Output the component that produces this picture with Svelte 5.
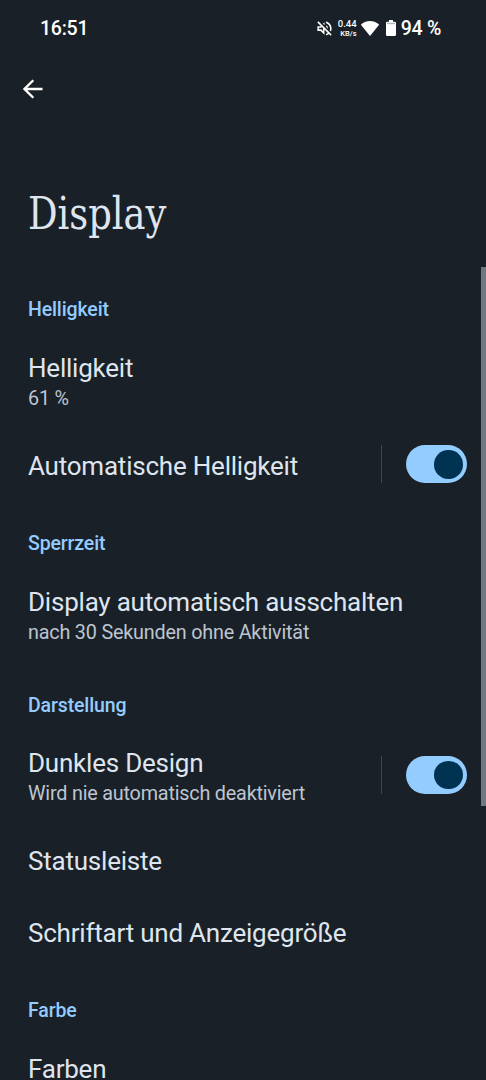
<script>
  const sections = [
    { name: 'Helligkeit', rows: [
      { title: 'Helligkeit', sub: '61 %' },
      { title: 'Automatische Helligkeit', toggle: true }
    ] },
    { name: 'Sperrzeit', rows: [
      { title: 'Display automatisch ausschalten', sub: 'nach 30 Sekunden ohne Aktivität' }
    ] },
    { name: 'Darstellung', rows: [
      { title: 'Dunkles Design', sub: 'Wird nie automatisch deaktiviert', toggle: true },
      { title: 'Statusleiste' },
      { title: 'Schriftart und Anzeigegröße' }
    ] },
    { name: 'Farbe', rows: [{ title: 'Farben' }] }
  ];
</script>

<main class="screen">
  <header class="status">
    <span class="time">16:51</span>
    <div class="indicators">
      <svg class="mute" width="18" height="18" viewBox="0 0 24 24" fill="#fff"><path d="M4.34 2.93 2.93 4.34 7.29 8.7 7 9H3v6h4l5 5v-6.59l4.18 4.18c-.65.49-1.38.88-2.18 1.11v2.06a8.94 8.94 0 0 0 3.61-1.75l2.05 2.05 1.41-1.41L4.34 2.93zM10 15.17 7.83 13H5v-2h2.83l.88-.88L10 11.41v3.76zM19 12c0 .82-.15 1.61-.41 2.34l1.53 1.53c.56-1.17.88-2.48.88-3.87 0-4.28-2.99-7.86-7-8.77v2.06c2.89.86 5 3.54 5 6.71zm-7-8-1.88 1.88L12 7.76V4zm4.5 8A4.5 4.5 0 0 0 14 7.97v1.79l2.48 2.48c.01-.08.02-.16.02-.24z" /></svg>
      <div class="speed"><span class="rate">0.44</span><span class="unit">KB/s</span></div>
      <svg class="wifi" width="18" height="15" viewBox="0 0 18 15" fill="#fff"><path d="M9 15 .3 4.2C0 3.8 0 3.3.5 3 3 .9 5.900 0 9 0s6 .9 8.500 3c.5.3.5.8.2 1.200z" /></svg>
      <svg class="battery" width="10" height="16" viewBox="0 0 10 16"><path fill="#fff" d="M3 0h4v1.700h1.700Q10 1.700 10 3v11.700Q10 16 8.700 16H1.300Q0 16 0 14.700V3Q0 1.700 1.300 1.700H3z" /><path fill="#b5b8ba" d="M1 2.700h8v1.500H1z" /></svg>
      <span class="percent">94 %</span>
    </div>
  </header>

  <nav>
    <svg width="20" height="20" viewBox="0 0 20 20" fill="none" stroke="#fff" stroke-width="2.300"><path d="M19.500 10H2M10.300 1.200 1.500 10l8.800 8.800" /></svg>
  </nav>

  <h1>Display</h1>

  {#each sections as section}
    <section>
      <h2>{section.name}</h2>
      {#each section.rows as row}
        <div class="row" class:double={row.sub}>
          <div class="label">
            <div class="title">{row.title}</div>
            {#if row.sub}<div class="sub">{row.sub}</div>{/if}
          </div>
          {#if row.toggle}
            <div class="control"><div class="switch"><i></i></div></div>
          {/if}
        </div>
      {/each}
    </section>
  {/each}
  <div class="scrollbar"></div>
</main>

<style>
  :global(body) { background: #1a2027; overflow: hidden; }
  .screen { position: relative; height: 1080px; overflow: hidden; background: #1a2027; color: #dfe5ee; font-family: Roboto, sans-serif; box-sizing: border-box; }
  .status { height: 56px; padding: 0 45px 0 40px; display: flex; align-items: center; justify-content: space-between; color: #fff; font-size: 19.500px; font-weight: 500; letter-spacing: -.25px; }
  .indicators { display: flex; align-items: center; }
  .mute { width: 19px; height: 19px; }
  .speed { width: 20px; margin-left: 3px; display: flex; flex-direction: column; align-items: flex-end; letter-spacing: 0; }
  .rate { font-size: 9.500px; line-height: 10px; }
  .unit { font-size: 7.500px; line-height: 9px; }
  .wifi { margin-left: 4px; }
  .battery { margin: 0 5px 0 7px; }
  nav { height: 66px; padding-left: 23px; display: flex; align-items: center; }
  h1 { margin: 0; height: 146px; padding: 62px 0 0 28px; box-sizing: border-box; font: 400 45.500px/60px "DejaVu Serif Condensed", "DejaVu Serif", serif; transform: scaleX(.9); transform-origin: 28px 0; }
  h2 { margin: 0; height: 63.800px; padding: 31px 28px 0; box-sizing: border-box; font-size: 19.500px; line-height: 22px; font-weight: 500; letter-spacing: -.13px; color: #93ccff; }
  .row { height: 72px; padding: 0 19px 0 28px; display: flex; align-items: center; justify-content: space-between; }
  .row.double { height: 98px; }
  .title { font-size: 26px; line-height: 32px; letter-spacing: -.22px; white-space: nowrap; }
  .row.double .label { padding-top: 3px; }
  .sub { font-size: 19.800px; line-height: 29px; letter-spacing: -.2px; color: #bdc5d0; white-space: nowrap; }
  .control { display: flex; align-items: center; height: 38px; padding-left: 23.500px; border-left: 1px solid #42474e; margin-bottom: 3px; }
  .switch { width: 61.500px; height: 38px; padding: 0 4.500px; box-sizing: border-box; border-radius: 19px; background: #93ccff; display: flex; align-items: center; justify-content: flex-end; }
  .switch i { width: 28.500px; height: 28.500px; border-radius: 50%; background: #003351; }
  .scrollbar { position: absolute; top: 267px; right: 0; width: 5px; height: 539px; background: #6f7780; }
</style>
